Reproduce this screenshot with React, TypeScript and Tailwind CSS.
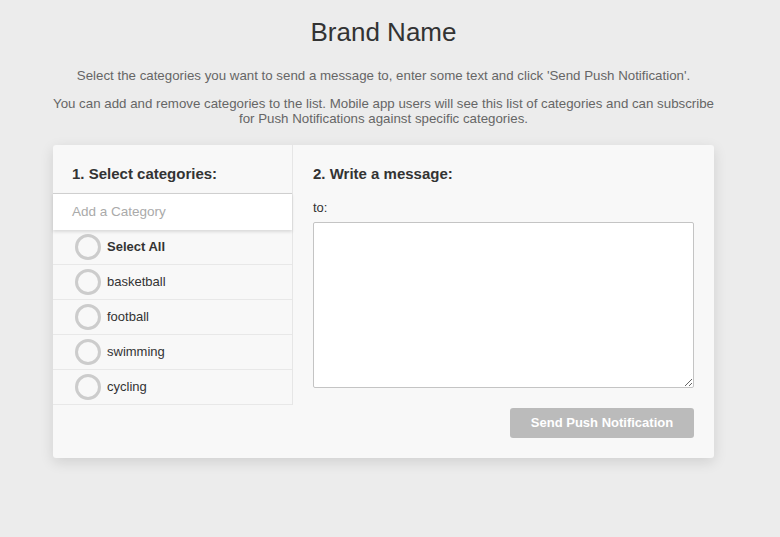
const categories = ["basketball", "football", "swimming", "cycling"];

function Circle() {
  return <span className="w-[26px] h-[26px] rounded-full border-[3px] border-[#cccccc] bg-transparent shrink-0" />;
}

export default function App() {
  return (
    <div className="min-h-[537px] bg-[#ececec] font-['Liberation_Sans',Arial,sans-serif] text-[#333]">
      <div className="w-[767px]">
        <div className="pt-[16px] text-center">
          <h1 className="text-[26px] font-light leading-[32px] text-[#333]">Brand Name</h1>
          <p className="mt-[20px] text-[13.3px] leading-[15px] text-[#666]">
            Select the categories you want to send a message to, enter some text and click 'Send Push Notification'.
          </p>
          <p className="mt-[13px] mx-auto max-w-[680px] text-[13.3px] leading-[15px] text-[#666]">
            You can add and remove categories to the list. Mobile app users will see this list of categories and can subscribe for Push Notifications against specific categories.
          </p>
        </div>

        <div className="mt-[19px] mx-auto w-[661px] bg-[#f8f8f8] rounded-[3px] shadow-[0_4px_14px_rgba(0,0,0,0.12)] flex">
          {/* Left column */}
          <div className="w-[240px] border-r border-[#e6e6e6] self-start">
            <h2 className="px-[19px] pt-[20px] pb-[10px] text-[15px] font-bold leading-[18px]">1. Select categories:</h2>
            <div className="bg-white border-t border-[#cfcfcf] shadow-[0_2px_3px_rgba(0,0,0,0.12)] h-[37px] flex items-center px-[19px] relative z-10">
              <span className="text-[13.5px] text-[#aaa]">Add a Category</span>
            </div>
            <div className="flex items-center gap-[6px] pl-[22px] h-[35px] border-b border-[#e8e8e8]">
              <Circle />
              <span className="text-[13px] font-bold text-[#333]">Select All</span>
            </div>
            {categories.map((c) => (
              <div key={c} className="flex items-center gap-[6px] pl-[22px] h-[35px] border-b border-[#e8e8e8]">
                <Circle />
                <span className="text-[13px] text-[#333]">{c}</span>
              </div>
            ))}
          </div>

          {/* Right column */}
          <div className="flex-1 px-[20px] pt-[20px] pb-[20px]">
            <h2 className="text-[15px] font-bold leading-[18px]">2. Write a message:</h2>
            <div className="mt-[17px] text-[13px] leading-[16px] text-[#333]">to:</div>
            <textarea className="mt-[6px] block w-[381px] h-[166px] bg-white border border-[#c4c4c4] rounded-[2px] resize-y" />
            <div className="mt-[20px] flex justify-end">
              <button className="w-[184px] h-[30px] rounded-[3px] bg-[#bbbbbb] text-white text-[13px] font-bold">
                Send Push Notification
              </button>
            </div>
          </div>
        </div>
      </div>
    </div>
  );
}
